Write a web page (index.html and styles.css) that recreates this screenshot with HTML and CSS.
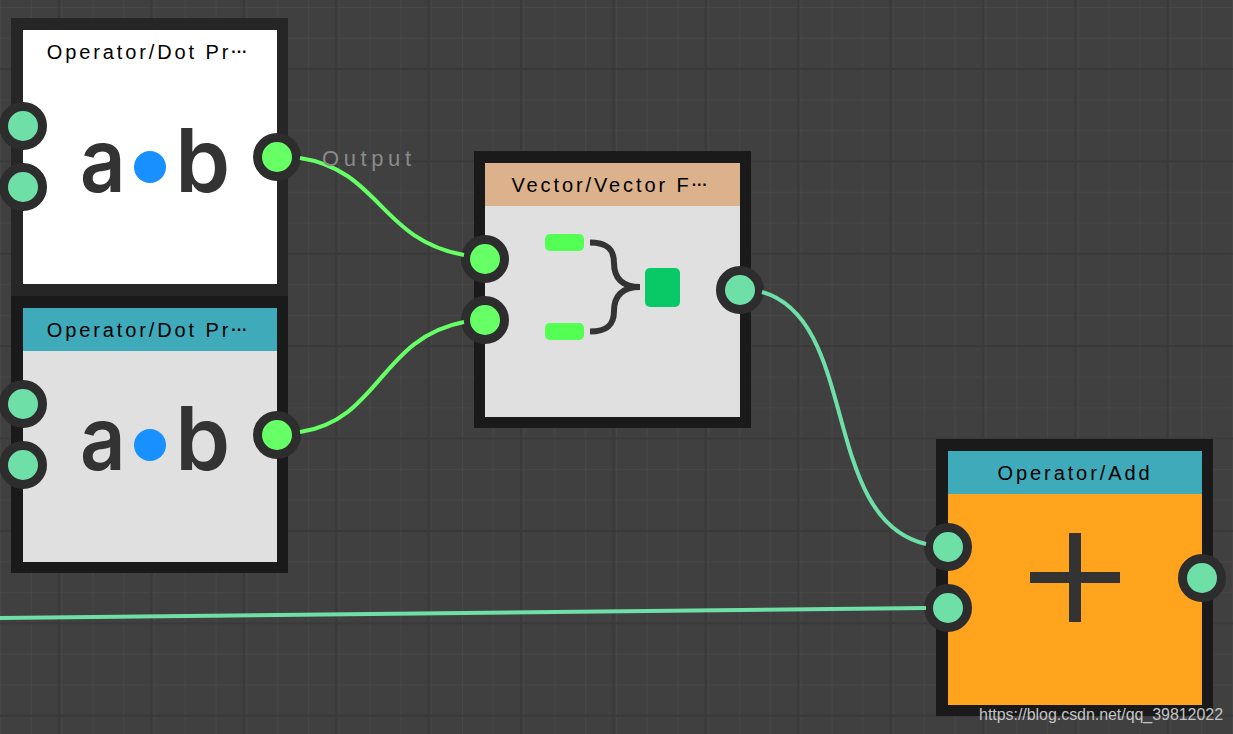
FILE: index.html
```html
<!DOCTYPE html>
<html lang="en">
<head>
<meta charset="utf-8">
<title>Node graph</title>
<link rel="stylesheet" href="styles.css">
</head>
<body>
<main class="canvas">
  <article class="node node-selected pos-a">
    <header class="title title-plain">Operator/Dot Pr<span class="more">···</span></header>
    <div class="body body-white">
      <div class="dot-icon"><span class="glyph glyph-a">a</span><i class="blue-dot"></i><span class="glyph glyph-b">b</span></div>
    </div>
    <span class="port port-in1 teal"></span>
    <span class="port port-in2 teal"></span>
    <span class="port port-out green"></span>
  </article>

  <article class="node pos-b">
    <header class="title title-teal">Operator/Dot Pr<span class="more">···</span></header>
    <div class="body">
      <div class="dot-icon"><span class="glyph glyph-a">a</span><i class="blue-dot"></i><span class="glyph glyph-b">b</span></div>
    </div>
    <span class="port port-in1 teal"></span>
    <span class="port port-in2 teal"></span>
    <span class="port port-out green"></span>
  </article>

  <article class="node node-narrow pos-c">
    <header class="title title-tan">Vector/Vector F<span class="more">···</span></header>
    <div class="body body-vector">
      <svg class="vector-icon" width="255" height="211" viewBox="0 0 255 211" aria-hidden="true">
        <rect x="60" y="28" width="39" height="17" rx="5" fill="#53ff53"/>
        <rect x="60" y="117" width="39" height="17" rx="5" fill="#53ff53"/>
        <rect x="160" y="62" width="35" height="39" rx="5" fill="#08c965"/>
        <path d="M105 36.500 C123 36.500 129 44 129 57 C129 72 137 81 155 81 C137 81 129 90 129 105 C129 118 123 125.500 105 125.500" fill="none" stroke="#333" stroke-width="6"/>
      </svg>
    </div>
    <span class="port port-in1 green"></span>
    <span class="port port-in2 green"></span>
    <span class="port port-out teal"></span>
  </article>

  <article class="node pos-d">
    <header class="title title-teal">Operator/Add</header>
    <div class="body body-orange">
      <svg class="plus-icon" width="90" height="89" viewBox="0 0 90 89" aria-hidden="true">
        <path d="M39 0h12v39h39v11H51v39H39V50H0V39h39z" fill="#333"/>
      </svg>
    </div>
    <span class="port port-in1 teal"></span>
    <span class="port port-in2 teal"></span>
    <span class="port port-out teal"></span>
  </article>

  <svg class="wires" width="1233" height="734" viewBox="0 0 1233 734" aria-hidden="true">
    <path class="wire wire-green" d="M300 158 C380 170 380 240 464 255"/>
    <path class="wire wire-green" d="M300 432 C380 420 380 338 464 322"/>
    <path class="wire wire-teal" d="M762 292 C860 320 820 520 926 544"/>
    <path class="wire wire-teal" d="M0 618 L926 608"/>
  </svg>

  <span class="output-label">Output</span>
  <span class="watermark">https://blog.csdn.net/qq_39812022</span>
</main>
</body>
</html>
```
FILE: styles.css
```css
* { box-sizing: border-box; }
html, body { margin: 0; height: 100%; overflow: hidden; background: #404040; }

.canvas {
  position: relative;
  width: 1233px;
  height: 734px;
  overflow: hidden;
  background-color: #404040;
  background-image:
    linear-gradient(#3a3a3a 2px, transparent 2px),
    linear-gradient(90deg, #3a3a3a 2px, transparent 2px),
    linear-gradient(#474747 1px, transparent 1px),
    linear-gradient(90deg, #474747 1px, transparent 1px);
  background-size: 92.4px 92.4px, 92.4px 92.4px, 30.8px 30.8px, 30.8px 30.8px;
  background-position: 0 68px, 58px 0, 0 7px, 0 -3px;
}

.node {
  position: absolute;
  width: 277px;
  height: 277px;
  display: flex;
  flex-direction: column;
  background: #e0e0e0;
  border-style: solid;
  border-color: #1a1a1a;
  border-width: 12px 11px 11px 12px;
}
.node-selected { border-color: #262626; height: 278px; border-bottom-width: 12px; background: #fff; }
.node-narrow { border-left-width: 11px; }

.pos-a { left: 11px; top: 18px; }
.pos-b { left: 11px; top: 296px; }
.pos-c { left: 474px; top: 151px; }
.pos-d { left: 936px; top: 439px; }

.title {
  flex: none;
  height: 43px;
  display: flex;
  align-items: center;
  justify-content: center;
  font: 400 20px/1 "Liberation Sans", Arial, sans-serif;
  letter-spacing: 2.9px;
  color: #000;
  white-space: nowrap;
}
.title-plain { background: #fff; }
.title-teal { background: #3fabba; }
.title-tan { background: #dbb28c; }
.more { font-size: 16px; font-weight: 700; letter-spacing: 0; margin-right: 6px; }

.body {
  flex: 1;
  min-height: 0;
  display: flex;
  align-items: center;
  justify-content: center;
  background: #e0e0e0;
}
.body-white { background: #fff; }
.body-orange { background: #ffa41c; padding-bottom: 45px; }
.body-vector { align-items: flex-start; }

.dot-icon {
  display: flex;
  align-items: center;
  justify-content: center;
  height: 100px;
  margin-bottom: 38px;
  margin-left: 5px;
  gap: 9px;
  color: #333;
}
.glyph {
  font: 600 88px/100px "Inter", sans-serif;
}
.glyph-a {
  transform: scaleX(0.9);
  transform-origin: right center;
}
.blue-dot {
  display: block;
  width: 32px;
  height: 32px;
  border-radius: 50%;
  background: #1890ff;
  margin-top: 14px;
}

.port {
  position: absolute;
  width: 48px;
  height: 48px;
  border-radius: 50%;
  border: 9px solid #2d2d2d;
}
.teal { background: #6fdfa8; }
.green { background: #66ff66; }
.port-in1 { left: -24px; top: 72px; }
.port-in2 { left: -24px; top: 133px; }
.port-out { right: -24px; top: 103px; }

.wires { position: absolute; left: 0; top: 0; pointer-events: none; }
.wire { fill: none; stroke-width: 4; }
.wire-green { stroke: #66ff66; }
.wire-teal { stroke: #6fdfa8; }

.output-label {
  position: absolute;
  left: 322px;
  top: 147px;
  font: 400 22px/24px "Liberation Sans", Arial, sans-serif;
  letter-spacing: 4.6px;
  color: #8a8a8a;
}
.watermark {
  position: absolute;
  right: 10px;
  top: 705px;
  font: 400 16px/19px "Liberation Sans", Arial, sans-serif;
  letter-spacing: -0.05px;
  color: #c4c4c4;
  white-space: nowrap;
}
```
